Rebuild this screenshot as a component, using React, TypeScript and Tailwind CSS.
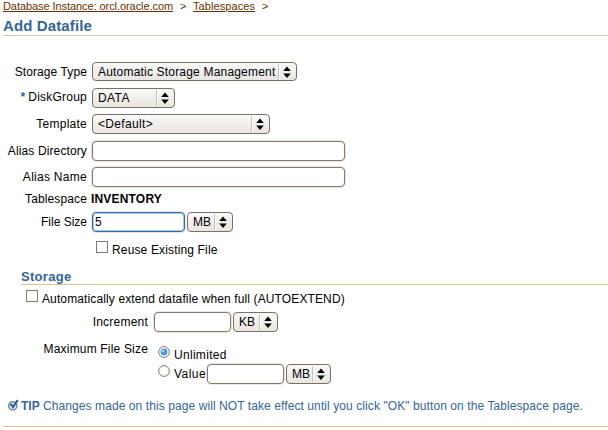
import type { ReactNode } from "react";

function Arrows() {
  return (
    <svg className="ml-auto h-[16px] w-[18px] shrink-0" viewBox="0 0 18 16">
      <rect x="0" y="0" width="1" height="16" fill="#c4c0ba" />
      <rect x="1" y="0" width="1" height="16" fill="#ffffff" />
      <path d="M9 2.5 L12.8 7 H5.2 Z M5.2 9.5 H12.8 L9 14 Z" fill="#000" />
    </svg>
  );
}

function Select({ className, children }: { className: string; children: ReactNode }) {
  return (
    <button
      type="button"
      className={`flex shrink-0 items-center rounded-[4px] border border-[#7c7064] bg-linear-to-b from-[#fbfaf9] via-[#f1efec] to-[#e9e6e2] pl-[5px] text-left whitespace-nowrap ${className}`}
    >
      <span>{children}</span>
      <Arrows />
    </button>
  );
}

function Input({ className, value = "" }: { className: string; value?: string }) {
  return (
    <input
      readOnly
      value={value}
      className={`h-[20px] shrink-0 rounded-[4px] border bg-white px-[2px] outline-none ${className}`}
    />
  );
}

function Label({ className, children }: { className: string; children: ReactNode }) {
  return <label className={`shrink-0 text-right whitespace-nowrap ${className}`}>{children}</label>;
}

function Radio({ checked = false }: { checked?: boolean }) {
  return (
    <svg className="h-[12px] w-[12px] shrink-0" viewBox="0 0 12 12">
      <circle cx="6" cy="6" r="5.4" fill="#fff" stroke="#81776c" strokeWidth="1" />
      {checked && <circle cx="6" cy="6" r="3.4" fill="#4b97df" />}
      {checked && <circle cx="5" cy="5" r="1.2" fill="#c5e2fa" />}
    </svg>
  );
}

function TipIcon() {
  return (
    <svg className="h-[13px] w-[12px] shrink-0" viewBox="0 0 12 13" fill="none">
      <circle cx="4.8" cy="6.8" r="4.1" fill="#dfe7ef" stroke="#7189a3" strokeWidth="1.5" />
      <path d="M2.6 4.8 L5 8 L9.8 1" stroke="#2d5d8e" strokeWidth="2" />
    </svg>
  );
}

export default function App() {
  return (
    <main className="h-[430px] w-[608px] overflow-hidden bg-white font-['Liberation_Sans',Arial,sans-serif] text-[12px] leading-[14px] text-black">
      <nav className="flex h-[13px] pl-[3px] text-[11px] leading-[13px] whitespace-nowrap text-[#663300]">
        <a className="w-[177px] tracking-[-0.07px] underline underline-offset-1">Database Instance: orcl.oracle.com</a>
        <span className="w-[13px]">&gt;</span>
        <a className="w-[69px] tracking-[0.08px] underline underline-offset-1">Tablespaces</a>
        <span>&gt;</span>
      </nav>
      <h1 className="ml-[3px] h-[23px] border-b border-[#d0d0b0] pt-[4px] text-[15px] leading-[18px] font-bold tracking-[0.12px] text-[#336699]">
        Add Datafile
      </h1>

      <div className="mt-[26px] flex h-[19px] items-center">
        <Label className="mr-[5px] w-[87px] tracking-[0.1px]">Storage Type</Label>
        <Select className="h-[19px] w-[205px] tracking-[0.19px]">Automatic Storage Management</Select>
      </div>
      <div className="mt-[7px] flex h-[20px] items-center">
        <Label className="mr-[5px] w-[87px] pb-[2px] tracking-[0.22px]">
          <b className="mr-[3px] text-[#336699]">*</b>DiskGroup
        </Label>
        <Select className="h-[20px] w-[83px] tracking-[0.4px]">DATA</Select>
      </div>
      <div className="mt-[6px] flex h-[20px] items-center">
        <Label className="mr-[5px] w-[87px] tracking-[0.25px]">Template</Label>
        <Select className="h-[20px] w-[178px] tracking-[0.33px]">&lt;Default&gt;</Select>
      </div>
      <div className="mt-[7px] flex h-[20px] items-center">
        <Label className="mr-[5px] w-[87px] tracking-[0.12px]">Alias Directory</Label>
        <Input className="w-[253px] border-[#85786b] shadow-[0_0_0_1px_#ebe7e0]" />
      </div>
      <div className="mt-[6px] flex h-[20px] items-center">
        <Label className="mr-[5px] w-[87px] tracking-[0.28px]">Alias Name</Label>
        <Input className="w-[253px] border-[#85786b] shadow-[0_0_0_1px_#ebe7e0]" />
      </div>
      <div className="mt-[5px] flex h-[14px] items-center">
        <Label className="mr-[4px] w-[87px] tracking-[0.12px]">Tablespace</Label>
        <b className="tracking-[0.18px]">INVENTORY</b>
      </div>
      <div className="mt-[6px] flex h-[20px] items-center">
        <Label className="mr-[5px] w-[87px]">File Size</Label>
        <Input
          className="mr-[2px] w-[93px] border-[#336ca6] shadow-[0_0_0_1px_#e2e5e8,inset_0_0_0_1px_#a9c6e2]"
          value="5"
        />
        <Select className="h-[20px] w-[46px]">MB</Select>
      </div>
      <div className="mt-[9px] flex h-[16px] pl-[96px]">
        <span className="mr-[4px] h-[12px] w-[12px] border border-[#82776b]" />
        <span className="pt-[2px] tracking-[0.15px]">Reuse Existing File</span>
      </div>

      <h2 className="mt-[12px] ml-[21px] h-[16px] border-b border-[#cccc99] text-[13px] leading-[15px] font-bold tracking-[0.3px] text-[#336699]">
        Storage
      </h2>
      <div className="mt-[5px] flex h-[17px] pl-[26px]">
        <span className="mr-[4px] h-[12px] w-[12px] border border-[#82776b]" />
        <span className="pt-[2px] tracking-[0.12px]">Automatically extend datafile when full (AUTOEXTEND)</span>
      </div>
      <div className="mt-[5px] flex h-[20px] items-center">
        <Label className="mr-[6px] w-[148px] tracking-[0.22px]">Increment</Label>
        <Input className="mr-[2px] w-[77px] border-[#85786b] shadow-[0_0_0_1px_#ebe7e0]" />
        <Select className="h-[20px] w-[45px]">KB</Select>
      </div>
      <div className="mt-[10px] flex h-[42px]">
        <Label className="mr-[10px] w-[148px] tracking-[0.18px]">Maximum File Size</Label>
        <div>
          <div className="flex h-[22px] pt-[4px]">
            <Radio checked />
            <span className="ml-[4px] pt-[2px] tracking-[0.3px]">Unlimited</span>
          </div>
          <div className="flex h-[20px] items-center">
            <span className="flex w-[49px]">
              <span className="-mt-[2px] flex">
                <Radio />
              </span>
              <span className="ml-[4px] tracking-[0.45px]">Value</span>
            </span>
            <Input className="mr-[2px] w-[77px] border-[#85786b] shadow-[0_0_0_1px_#ebe7e0]" />
            <Select className="h-[20px] w-[45px]">MB</Select>
          </div>
        </div>
      </div>
      <p className="mt-[15px] ml-[3px] flex h-[28px] border-b border-[#cccc99] pl-[5px] whitespace-nowrap text-[#336699]">
        <TipIcon />
        <b className="ml-[1px] w-[22px]">TIP</b>
        <span className="tracking-[0.085px]">
          Changes made on this page will NOT take effect until you click "OK" button on the Tablespace page.
        </span>
      </p>
    </main>
  );
}
